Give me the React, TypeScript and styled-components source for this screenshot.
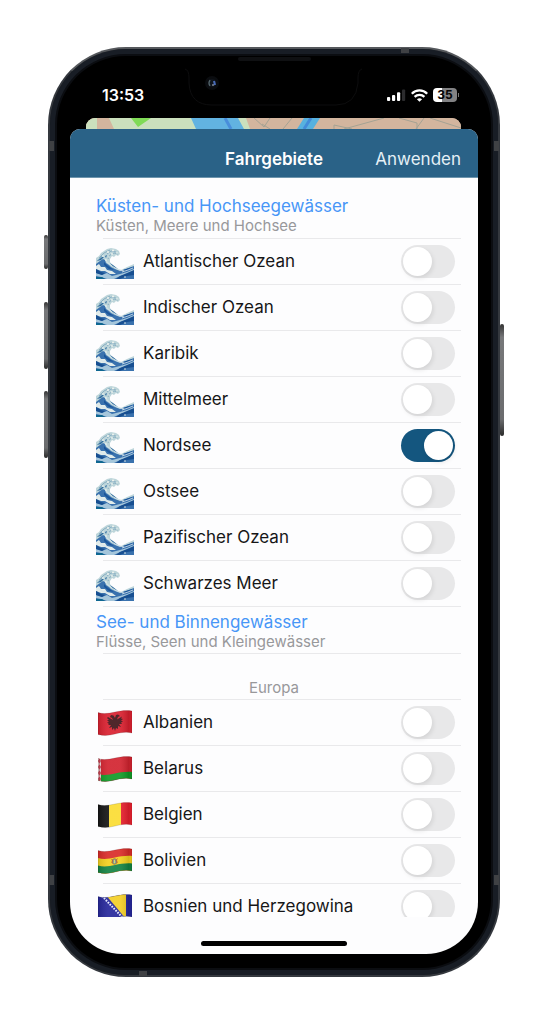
import React, { useState } from "react";
import styled, { createGlobalStyle } from "styled-components";

const GlobalStyle = createGlobalStyle`
  *, *::before, *::after { box-sizing: border-box; }
  body {
    margin: 0;
    background: #fff;
    font-family: Inter, "Liberation Sans", sans-serif;
    -webkit-font-smoothing: antialiased;
  }
  h1, h2, h3, p, ul { margin: 0; padding: 0; }
`;

const Page = styled.main`
  display: flex;
  height: 100vh;
  min-height: 640px;
  padding: 47px 48px;
`;

const Device = styled.div`
  position: relative;
  flex: 1;
  min-width: 0;
  display: flex;
  flex-direction: column;
  padding: 0 20px 21px;
  border: 2px solid #34383e;
  border-top-color: #55585c;
  border-radius: 78px;
  background: #000;
  box-shadow: inset 0 0 0 5px #181d25, inset 0 0 0 7px #0b0d11;
`;

const SideButton = styled.span<{ $side: "left" | "right"; $top: number; $length: number }>`
  position: absolute;
  ${(p) => p.$side}: -6px;
  top: ${(p) => p.$top}px;
  width: 4px;
  height: ${(p) => p.$length}px;
  border-radius: 2px;
  background: linear-gradient(#333, #77787a 12%, #6b6c6e 85%, #2a2a2a);
`;

const Antenna = styled.span<{ $edge: "top" | "bottom" | "left" | "right"; $start: number }>`
  position: absolute;
  ${(p) => p.$edge}: -1px;
  ${(p) => (p.$edge === "top" ? "right" : p.$edge === "bottom" ? "left" : "top")}: ${(p) => p.$start}px;
  width: ${(p) => (p.$edge === "top" || p.$edge === "bottom" ? 8 : 5)}px;
  height: ${(p) => (p.$edge === "top" || p.$edge === "bottom" ? 5 : 10)}px;
  background: #3f4144;
`;

const Notch = styled.svg`
  position: absolute;
  top: 0;
  left: 50%;
  width: 180px;
  height: 60px;
  margin-left: -92px;
`;

const StatusBar = styled.div`
  display: flex;
  flex: none;
  align-items: center;
  justify-content: space-between;
  height: 69px;
  padding: 23px 19px 0 32px;
  color: #fff;
`;

const Time = styled.span`
  font-size: 16px;
  font-weight: 600;
  line-height: 20px;
`;

const StatusIcons = styled.div`
  display: flex;
  align-items: center;
  gap: 5px;
`;

const MapPeek = styled.div`
  flex: none;
  height: 11px;
  margin: 0 17px 0 16px;
  overflow: hidden;
  border-radius: 9px 9px 0 0;
  background: #d3b59e;

  svg {
    display: block;
    width: 100%;
    height: 11px;
  }
`;

const Sheet = styled.section`
  flex: 1;
  min-height: 0;
  display: flex;
  flex-direction: column;
  overflow: hidden;
  border-radius: 10px 10px 52px 52px;
  background: #fdfdfe;
`;

const SheetHeader = styled.header`
  flex: none;
  display: grid;
  grid-template-columns: 1fr auto 1fr;
  align-items: center;
  height: 49px;
  padding: 12px 17px 0;
  border-bottom: 1px solid #6e95ad;
  background: #2a6287;
  color: #fff;
`;

const Title = styled.h1`
  grid-column: 2;
  font-size: 17px;
  font-weight: 600;
  line-height: 22px;
`;

const ApplyButton = styled.button`
  justify-self: end;
  padding: 0;
  border: 0;
  background: none;
  color: #e4f0f6;
  font: inherit;
  font-size: 17px;
  line-height: 22px;
  cursor: pointer;
`;

const ScrollArea = styled.div`
  flex: 1;
  min-height: 0;
  overflow-y: auto;
  scrollbar-width: none;
  padding: 0 17px 0 26px;
`;

const SafeArea = styled.footer`
  flex: none;
  display: flex;
  justify-content: center;
  height: 37px;
  padding-top: 24px;
`;

const HomeIndicator = styled.span`
  width: 146px;
  height: 5px;
  border-radius: 3px;
  background: #000;
`;

const Divided = `
  background: linear-gradient(#e9e9eb, #e9e9eb) 7px 100% / 100% 1px no-repeat;
`;

const SectionHeading = styled.div<{ $first?: boolean }>`
  ${Divided}
  height: ${(p) => (p.$first ? 61 : 47)}px;
  padding-top: ${(p) => (p.$first ? 18 : 5)}px;
`;

const SectionTitle = styled.h2`
  font-size: 17px;
  font-weight: 400;
  line-height: 20px;
  color: #4796f7;
`;

const SectionNote = styled.p`
  font-size: 15px;
  line-height: 20px;
  color: #98989b;
`;

const GroupTitle = styled.h3`
  ${Divided}
  height: 46px;
  padding: 24px 9px 0 0;
  font-size: 15px;
  font-weight: 400;
  line-height: 20px;
  text-align: center;
  color: #98989b;
`;

const List = styled.ul`
  list-style: none;
`;

const Row = styled.li`
  ${Divided}
  display: flex;
  align-items: center;
  height: 46px;
  padding-right: 6px;
`;

const RowIcon = styled.span`
  display: flex;
  flex: none;
  justify-content: center;
  width: 38px;
  margin-right: 9px;
`;

const RowLabel = styled.label`
  flex: 1;
  padding-bottom: 3px;
  font-size: 17px;
  line-height: 22px;
  white-space: nowrap;
  color: #161617;
`;

const Switch = styled.input`
  flex: none;
  appearance: none;
  width: 54px;
  height: 33px;
  margin: 0 0 2px;
  border-radius: 17px;
  background: #e8e8e9;
  cursor: pointer;

  &::before {
    content: "";
    display: block;
    width: 29px;
    height: 29px;
    margin: 2px;
    border-radius: 50%;
    background: #fff;
    box-shadow: 1px 2px 5px rgba(0, 0, 0, 0.1);
  }

  &:checked {
    background: #14567f;
  }

  &:checked::before {
    margin-left: 23px;
  }
`;

const SignalIcon = () => (
  <svg width="19" height="12" viewBox="0 0 19 12" aria-hidden="true">
    <rect x="0" y="8" width="3.2" height="4" rx="1" fill="#fff" />
    <rect x="5" y="6" width="3.2" height="6" rx="1" fill="#fff" />
    <rect x="10" y="3.2" width="3.2" height="8.8" rx="1" fill="#fff" />
    <rect x="15" y="0.5" width="3.2" height="11.5" rx="1" fill="#2c2c2e" />
  </svg>
);

const WifiIcon = () => (
  <svg width="17" height="13" viewBox="0 0 17 13" aria-hidden="true">
    <g fill="none" stroke="#fff" strokeWidth="2.3">
      <path d="M0.8 4.8 C5 0.3 12 0.3 16.2 4.8" />
      <path d="M3.6 7.9 C6.3 5.2 10.7 5.2 13.4 7.9" />
    </g>
    <path d="M5.9 10.2 C7.4 8.9 9.6 8.9 11.1 10.2 L8.5 12.8 Z" fill="#fff" />
  </svg>
);

const BatteryShell = styled.span`
  position: relative;
  width: 24px;
  height: 14px;
  margin-right: 2px;
  border-radius: 4px;
  background: linear-gradient(90deg, #fff 9px, #828284 9px);
  color: #050505;
  font-size: 12px;
  font-weight: 700;
  line-height: 14px;
  text-align: center;

  &::after {
    content: "";
    position: absolute;
    right: -2px;
    top: 5px;
    width: 1px;
    height: 4px;
    background: #777;
  }
`;

const WaveIcon = () => (
  <svg width="38" height="33" viewBox="0 -2 38 33" aria-hidden="true">
    <path
      d="M0 10 L3 8 L5 5 L8 3 L11 1 L15 0 L20 1 L23 3 L24 6 L22 8 L20 7 L18 9 L16 8 L14 11 L14 14 L16 17 L20 20 L25 22 L31 19 L38 16 V31 H0 Z"
      fill="#bdd5da"
    />
    <path d="M0 16 L4 13 L7 11 L9 12 L10 15 L13 17 L15 19 L19 21 L24 23 L30 21 L38 18 V31 H0 Z" fill="#3a72ae" />
    <path d="M1 13 L6 9 L8 9 L5 12 Z M14 15 L17 19 L22 21 L17 17 Z M9 8 L11 7 L10 10 Z" fill="#2f6c9e" />
    <path d="M0 18 L3 16 L5 19 L9 19 L11 22 L16 23 L20 26 L14 26 L9 23 L5 23 L0 21 Z" fill="#e2ecea" />
    <path d="M0 25 L6 27 L11 25 L16 28 L24 26 L31 24 L38 21 V23 L31 26 L24 28 L18 31 H11 L5 29 L0 28 Z" fill="#a5c6db" />
    <path d="M0 21 L5 24 L9 25 L6 27 L0 25 Z M24 28 L31 25 L38 22 V27 L31 28 L24 31 H20 Z" fill="#174f91" />
    <path d="M8 14 L12 18 L18 22 L13 21 L8 17 Z M27 22 L33 20 L37 19 L30 23 Z" fill="#1b569b" />
    <path d="M0 29 L6 29 L9 31 H0 Z" fill="#0e6791" />
    <g fill="none" stroke="#7ba5bd" strokeWidth="0.8">
      <path d="M3 10 L8 5 L14 2 M11 6 L15 3 L20 4 M12 11 L14 7 L18 5 L22 6 M1 13 L6 8" />
      <path d="M9 11 L12 15 L16 18 L21 21 L28 23" stroke="#dce9eb" />
      <path d="M2 18 L6 21 L12 23 M26 24 L32 22 L37 20" stroke="#d5e5ed" />
    </g>
    <g fill="#f0f5ef">
      <circle cx="12" cy="4" r="1" />
      <circle cx="17" cy="2.5" r="1" />
      <circle cx="7" cy="8" r="0.8" />
      <circle cx="16" cy="6" r="0.9" />
      <circle cx="21" cy="5" r="0.8" />
      <circle cx="13" cy="9" r="0.7" />
      <circle cx="10" cy="12" r="0.8" />
      <circle cx="29" cy="29" r="0.8" />
    </g>
  </svg>
);

const FLAG_SHAPE = "M0 2.5 C6 4.5 12 3 17 2 S28 0 34 1 V23 C28 21.5 23 22.5 17 24 S6 26 0 24.5 Z";

const Flag = ({ id, children }: { id: string; children: React.ReactNode }) => (
  <svg width="34" height="26" viewBox="0 0 34 26" aria-hidden="true">
    <defs>
      <clipPath id={`shape-${id}`}>
        <path d={FLAG_SHAPE} />
      </clipPath>
      <linearGradient id={`shade-${id}`}>
        <stop offset="0" stopColor="#000" stopOpacity="0.12" />
        <stop offset="0.3" stopColor="#fff" stopOpacity="0.08" />
        <stop offset="0.65" stopColor="#fff" stopOpacity="0.08" />
        <stop offset="0.9" stopColor="#000" stopOpacity="0.12" />
        <stop offset="1" stopColor="#000" stopOpacity="0.04" />
      </linearGradient>
    </defs>
    <g clipPath={`url(#shape-${id})`}>
      {children}
      <rect width="34" height="26" fill={`url(#shade-${id})`} />
    </g>
    <path d={FLAG_SHAPE} fill="none" stroke="#000" strokeOpacity="0.18" strokeWidth="0.7" />
  </svg>
);

const Albania = () => (
  <Flag id="al">
    <rect width="34" height="26" fill="#d9202f" />
    <path
      d="M17 8 L15.5 5.5 L13 5 L12 7 L14 8 L15 10 L10 7 L9 8 L11 10 L9 10 L11 12 L9 12.5 L11 14 L10 15 L13 15 L11 18 L14 17 L14 20 L16 18 L17 21 L18 18 L20 19 L20 16 L23 17 L21 14 L24 14 L23 12.5 L25 11.5 L23 10.5 L25 9 L23 8.5 L24 6.5 L19 9.5 L20 7 L22 6 L20 4.5 L18 5 Z"
      fill="#401419"
    />
  </Flag>
);

const Belarus = () => (
  <Flag id="by">
    <rect width="34" height="26" fill="#d2232f" />
    <path d="M0 18 C6 20 12 18.5 17 17.5 S28 15.5 34 16 V26 H0 Z" fill="#109a27" />
    <path d="M0 0 H3 V26 H0 Z" fill="#eed9d9" />
    <path d="M1.5 2 L3 5 L1.5 8 L0 5 Z M1.5 8 L3 11 L1.5 14 L0 11 Z M1.5 14 L3 17 L1.5 20 L0 17 Z M1.5 20 L3 23 L1.5 26 L0 23 Z" fill="#c84050" />
  </Flag>
);

const Belgium = () => (
  <Flag id="be">
    <rect width="12" height="26" fill="#151515" />
    <rect x="11" width="12" height="26" fill="#fbdc32" />
    <rect x="23" width="11" height="26" fill="#e7202e" />
  </Flag>
);

const Bolivia = () => (
  <Flag id="bo">
    <rect width="34" height="26" fill="#d92b28" />
    <path d="M0 10 C6 12 12 10.5 17 9.5 S28 7.5 34 8 V26 H0 Z" fill="#f3d01e" />
    <path d="M0 17.5 C6 19.5 12 18 17 17 S28 15 34 15.5 V26 H0 Z" fill="#138343" />
    <ellipse cx="16.5" cy="13.5" rx="2.4" ry="2.8" fill="#71a391" stroke="#a86c28" strokeWidth="0.9" />
    <path d="M13.5 11 L15 13 L13.5 15 M19.5 10.5 L18 12.5 L19.5 15" stroke="#b94b29" strokeWidth="0.8" fill="none" />
    <path d="M16.5 12 V15" stroke="#f2d356" strokeWidth="0.9" />
  </Flag>
);

const Bosnia = () => (
  <Flag id="ba">
    <rect width="34" height="26" fill="#26279b" />
    <path d="M7 0 H28 V25 Z" fill="#f4cf26" />
    <path d="M4 2 L26 25" stroke="#e8ecff" strokeWidth="2" strokeDasharray="1.6 1.2" />
  </Flag>
);

type Area = { id: string; name: string; Icon: () => React.JSX.Element };

const SEAS: Area[] = [
  { id: "atlantik", name: "Atlantischer Ozean", Icon: WaveIcon },
  { id: "indik", name: "Indischer Ozean", Icon: WaveIcon },
  { id: "karibik", name: "Karibik", Icon: WaveIcon },
  { id: "mittelmeer", name: "Mittelmeer", Icon: WaveIcon },
  { id: "nordsee", name: "Nordsee", Icon: WaveIcon },
  { id: "ostsee", name: "Ostsee", Icon: WaveIcon },
  { id: "pazifik", name: "Pazifischer Ozean", Icon: WaveIcon },
  { id: "schwarzes-meer", name: "Schwarzes Meer", Icon: WaveIcon },
];

const COUNTRIES: Area[] = [
  { id: "albanien", name: "Albanien", Icon: Albania },
  { id: "belarus", name: "Belarus", Icon: Belarus },
  { id: "belgien", name: "Belgien", Icon: Belgium },
  { id: "bolivien", name: "Bolivien", Icon: Bolivia },
  { id: "bosnien", name: "Bosnien und Herzegowina", Icon: Bosnia },
];

type AreaListProps = { areas: Area[]; active: string[]; onToggle: (id: string) => void };

const AreaList = ({ areas, active, onToggle }: AreaListProps) => (
  <List>
    {areas.map(({ id, name, Icon }) => (
      <Row key={id}>
        <RowIcon>
          <Icon />
        </RowIcon>
        <RowLabel htmlFor={id}>{name}</RowLabel>
        <Switch id={id} type="checkbox" role="switch" checked={active.includes(id)} onChange={() => onToggle(id)} />
      </Row>
    ))}
  </List>
);

const MapStrip = () => (
  <svg viewBox="0 0 375 11" preserveAspectRatio="none" aria-hidden="true">
    <rect width="375" height="11" fill="#d3b59e" />
    <path d="M0 0 H160 L164 11 H0 Z" fill="#cbe0bd" />
    <path d="M11 0 H23 L28 11 H11 Z" fill="#d3b59e" />
    <path d="M45 0 H65 L52 9 Z" fill="#80db57" />
    <path d="M105 0 H152 L158 11 H110 Z" fill="#62b3e1" />
    <path d="M139 0 L145 11" stroke="#498edb" strokeWidth="3" />
    <path d="M211 11 L218 0 H234 L227 11 Z" fill="#57b1df" />
    <path d="M218 11 L225 0" stroke="#438bd9" strokeWidth="3" />
    <path
      d="M168 0 L178 9 L184 0 M176 6 L184 11 M197 11 L206 0 M248 11 V7 L266 11 M258 11 L298 0 M313 0 L331 5 V11 M330 11 L338 0 M344 0 L375 10"
      fill="none"
      stroke="#a5a293"
      strokeWidth="1"
    />
  </svg>
);

export default function App() {
  const [active, setActive] = useState<string[]>(["nordsee"]);

  const toggle = (id: string) =>
    setActive((ids) => (ids.includes(id) ? ids.filter((other) => other !== id) : [...ids, id]));

  return (
    <>
      <GlobalStyle />
      <Page>
        <Device>
          <SideButton $side="left" $top={186} $length={34} />
          <SideButton $side="left" $top={253} $length={67} />
          <SideButton $side="left" $top={342} $length={67} />
          <SideButton $side="right" $top={275} $length={112} />
          <Antenna $edge="top" $start={89} />
          <Antenna $edge="bottom" $start={89} />
          <Antenna $edge="left" $start={92} />
          <Antenna $edge="right" $start={92} />
          <Antenna $edge="left" $start={826} />
          <Antenna $edge="right" $start={826} />
          <Notch viewBox="0 0 180 60" aria-hidden="true">
            <rect x="56" y="8" width="73" height="4" rx="2" fill="#0f1012" />
            <path d="M3 20 Q7 21 7 29 V34 Q8 56 30 56 H154 Q174 56 176 34 V29 Q176 21 180 20" fill="none" stroke="#0d0d0e" />
            <circle cx="30" cy="34" r="7" fill="#0a0c0f" />
            <circle cx="30" cy="34" r="4" fill="#10151c" />
            <path d="M28 31 Q26 34 28 37" fill="none" stroke="#526369" strokeWidth="1.3" />
            <path d="M32 32 L33 36" stroke="#486bb8" strokeWidth="2" />
            <circle cx="31" cy="36" r="0.8" fill="#c8d7e6" />
          </Notch>
          <StatusBar>
            <Time>13:53</Time>
            <StatusIcons>
              <SignalIcon />
              <WifiIcon />
              <BatteryShell>35</BatteryShell>
            </StatusIcons>
          </StatusBar>
          <MapPeek>
            <MapStrip />
          </MapPeek>
          <Sheet>
            <SheetHeader>
              <Title>Fahrgebiete</Title>
              <ApplyButton type="button">Anwenden</ApplyButton>
            </SheetHeader>
            <ScrollArea>
              <SectionHeading $first>
                <SectionTitle>Küsten- und Hochseegewässer</SectionTitle>
                <SectionNote>Küsten, Meere und Hochsee</SectionNote>
              </SectionHeading>
              <AreaList areas={SEAS} active={active} onToggle={toggle} />
              <SectionHeading>
                <SectionTitle>See- und Binnengewässer</SectionTitle>
                <SectionNote>Flüsse, Seen und Kleingewässer</SectionNote>
              </SectionHeading>
              <GroupTitle>Europa</GroupTitle>
              <AreaList areas={COUNTRIES} active={active} onToggle={toggle} />
            </ScrollArea>
            <SafeArea>
              <HomeIndicator />
            </SafeArea>
          </Sheet>
        </Device>
      </Page>
    </>
  );
}
